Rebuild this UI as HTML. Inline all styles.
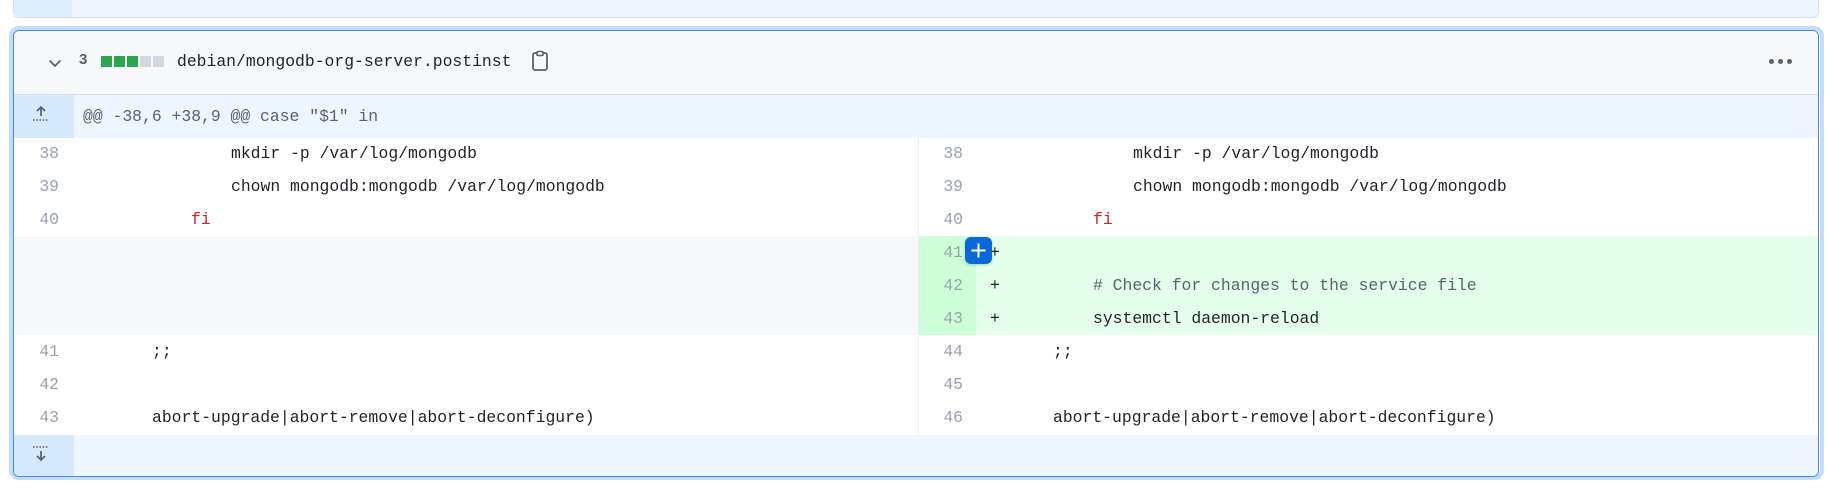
<!DOCTYPE html>
<html><head><style>
*{margin:0;padding:0;box-sizing:border-box}
body{width:1829px;height:492px;background:#fff;position:relative;overflow:hidden;font-family:"Liberation Mono",monospace;font-size:16.4px;color:#1f2328}
.abs{position:absolute}
.prev{left:13px;top:-10px;width:1806px;height:28px;background:#f0f6ff;border:1px solid #d8dee4;border-top:none;border-radius:0 0 6px 6px}
.prev .g{position:absolute;left:0;top:0;width:58px;height:100%;background:#ddeeff}
.glow{left:9px;top:26px;width:1815px;height:454px;border:4px solid #c4ddfb;border-radius:10px}
.card{left:13px;top:30px;width:1806px;height:447px;border:1.5px solid #3b8cf0;border-radius:6px;overflow:hidden}
.hdr{position:absolute;left:0;top:0;width:100%;height:64px;background:#f6f8fa;border-bottom:1px solid #d8dee4}
.hunk{position:absolute;left:0;top:64px;width:100%;height:43px;background:#eef6ff}
.hunk .g,.exp .g{position:absolute;left:0;top:0;width:60px;height:100%;background:#d7e9fc}
.exp{position:absolute;left:0;top:404px;width:100%;height:43px;background:#eef6ff}
.row{position:absolute;height:33px;line-height:33px;white-space:pre}
.ln{color:#9aa3ad;text-align:right;width:45px}
</style></head><body>
<div class="abs prev"><div class="g"></div></div>
<div class="abs glow"></div>
<div class="abs card">
  <div class="hdr"></div>
  <div class="hunk"><div class="g"></div></div>
  <div class="exp"><div class="g"></div></div>
</div>
<svg class="abs" style="left:47px;top:55px" width="16" height="16" viewBox="0 0 16 16"><path d="M2.5 5.5 L8 11 L13.5 5.5" fill="none" stroke="#59636e" stroke-width="1.8"/></svg>
<div class="abs" style="left:79px;top:51px;font-weight:bold;font-size:15px;color:#59636e;font-family:'Liberation Sans',sans-serif">3</div>
<div class="abs" style="left:101px;top:56px;width:11px;height:11px;background:#2da44e"></div>
<div class="abs" style="left:114px;top:56px;width:11px;height:11px;background:#2da44e"></div>
<div class="abs" style="left:127px;top:56px;width:11px;height:11px;background:#2da44e"></div>
<div class="abs" style="left:140px;top:56px;width:11px;height:11px;background:#d1d9e0"></div>
<div class="abs" style="left:153px;top:56px;width:11px;height:11px;background:#d1d9e0"></div>
<div class="abs" style="left:177px;top:51px;line-height:22px">debian/mongodb-org-server.postinst</div>
<svg class="abs" style="left:531px;top:50px" width="18" height="22" viewBox="0 0 18 22"><rect x="2" y="3" width="14" height="17" rx="2" fill="none" stroke="#59636e" stroke-width="1.8"/><rect x="6" y="1.5" width="6" height="4" rx="1" fill="#f6f8fa" stroke="#59636e" stroke-width="1.6"/></svg>
<div class="abs" style="left:1769px;top:59px;width:5px;height:5px;border-radius:50%;background:#59636e"></div>
<div class="abs" style="left:1778px;top:59px;width:5px;height:5px;border-radius:50%;background:#59636e"></div>
<div class="abs" style="left:1787px;top:59px;width:5px;height:5px;border-radius:50%;background:#59636e"></div>
<svg class="abs" style="left:31px;top:105px" width="20" height="18" viewBox="0 0 20 18"><path d="M10 2 L10 11 M6 6 L10 2 L14 6" fill="none" stroke="#59636e" stroke-width="1.8"/><path d="M2 15 H18" stroke="#59636e" stroke-width="1.4" stroke-dasharray="1.6 1.6"/></svg>
<div class="abs row" style="left:83px;top:100px;color:#59636e">@@ -38,6 +38,9 @@ case "$1" in</div>
<div class="abs" style="left:14px;top:236px;width:904px;height:99px;background:#f6f8fa"></div>
<div class="abs" style="left:918px;top:236px;width:58px;height:99px;background:#ccffd8"></div>
<div class="abs" style="left:976px;top:236px;width:842px;height:99px;background:#e6ffec"></div>
<div class="abs" style="left:918px;top:137px;width:1px;height:298px;background:#eef0f2"></div>
<div class="abs row ln" style="left:14px;top:137px">38</div><div class="abs row" style="left:231px;top:137px">mkdir -p /var/log/mongodb</div>
<div class="abs row ln" style="left:14px;top:170px">39</div><div class="abs row" style="left:231px;top:170px">chown mongodb:mongodb /var/log/mongodb</div>
<div class="abs row ln" style="left:14px;top:203px">40</div><div class="abs row" style="left:191px;top:203px;color:#cf222e">fi</div>
<div class="abs row ln" style="left:14px;top:335px">41</div><div class="abs row" style="left:152px;top:335px">;;</div>
<div class="abs row ln" style="left:14px;top:368px">42</div>
<div class="abs row ln" style="left:14px;top:401px">43</div><div class="abs row" style="left:152px;top:401px">abort-upgrade|abort-remove|abort-deconfigure)</div>
<div class="abs row ln" style="left:918px;top:137px">38</div><div class="abs row" style="left:1133px;top:137px">mkdir -p /var/log/mongodb</div>
<div class="abs row ln" style="left:918px;top:170px">39</div><div class="abs row" style="left:1133px;top:170px">chown mongodb:mongodb /var/log/mongodb</div>
<div class="abs row ln" style="left:918px;top:203px">40</div><div class="abs row" style="left:1093px;top:203px;color:#cf222e">fi</div>
<div class="abs row ln" style="left:918px;top:236px">41</div><div class="abs row" style="left:990px;top:236px">+</div>
<div class="abs row ln" style="left:918px;top:269px">42</div><div class="abs row" style="left:990px;top:269px">+</div><div class="abs row" style="left:1093px;top:269px;color:#59636e"># Check for changes to the service file</div>
<div class="abs row ln" style="left:918px;top:302px">43</div><div class="abs row" style="left:990px;top:302px">+</div><div class="abs row" style="left:1093px;top:302px">systemctl daemon-reload</div>
<div class="abs row ln" style="left:918px;top:335px">44</div><div class="abs row" style="left:1053px;top:335px">;;</div>
<div class="abs row ln" style="left:918px;top:368px">45</div>
<div class="abs row ln" style="left:918px;top:401px">46</div><div class="abs row" style="left:1053px;top:401px">abort-upgrade|abort-remove|abort-deconfigure)</div>
<div class="abs" style="left:965px;top:237px;width:27px;height:27px;border-radius:6px;background:#0969da;box-shadow:0 1px 3px rgba(0,0,0,.2)"></div>
<svg class="abs" style="left:965px;top:237px" width="27" height="27" viewBox="0 0 27 27"><path d="M13.5 6.5 V20.5 M6.5 13.5 H20.5" stroke="#fff" stroke-width="2"/></svg>
<svg class="abs" style="left:31px;top:444px" width="20" height="20" viewBox="0 0 20 20"><path d="M2 3 H18" stroke="#59636e" stroke-width="1.4" stroke-dasharray="1.6 1.6"/><path d="M10 7 L10 16 M6 12 L10 16 L14 12" fill="none" stroke="#59636e" stroke-width="1.8"/></svg>
</body></html>
